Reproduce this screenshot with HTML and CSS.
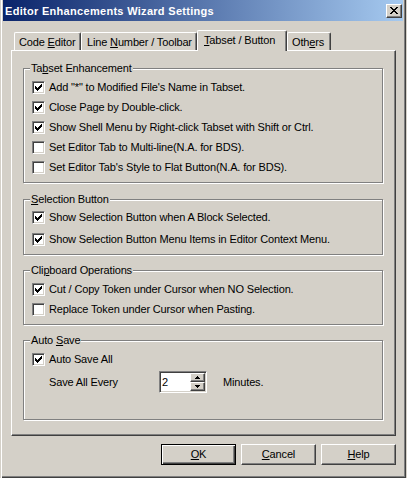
FILE: index.html
```html
<!DOCTYPE html>
<html>
<head>
<meta charset="utf-8">
<link rel="stylesheet" href="styles.css">
</head>
<body>
<div class="window">
  <div class="titlebar">
    <span class="title">Editor Enhancements Wizard Settings</span>
    <span class="close"><svg width="8" height="7" viewBox="0 0 8 7" shape-rendering="crispEdges"><path d="M0 0h2v1H0zM6 0h2v1H6zM1 1h2v1H1zM5 1h2v1H5zM2 2h4v1H2zM3 3h2v1H3zM2 4h4v1H2zM1 5h2v1H1zM5 5h2v1H5zM0 6h2v1H0zM6 6h2v1H6z" fill="#000"/></svg></span>
  </div>
  <div class="tabctl">
    <div class="tabs">
      <div class="tab t1">Code <u>E</u>ditor</div>
      <div class="tab t2">Line <u>N</u>umber / Toolbar</div>
      <div class="tab t3 sel"><u>T</u>abset / Button</div>
      <div class="tab t4">Oth<u>e</u>rs</div>
    </div>
    <div class="page">
      <fieldset class="group g1">
        <legend>Ta<u>b</u>set Enhancement</legend>
        <div class="row"><span class="cb"><svg width="7" height="7" viewBox="0 0 7 7" shape-rendering="crispEdges"><path d="M0 2h1v3H0zM1 3h1v3H1zM2 4h1v3H2zM3 3h1v3H3zM4 2h1v3H4zM5 1h1v3H5zM6 0h1v3H6z"/></svg></span>Add "*" to Modified File's Name in Tabset.</div>
        <div class="row"><span class="cb"><svg width="7" height="7" viewBox="0 0 7 7" shape-rendering="crispEdges"><path d="M0 2h1v3H0zM1 3h1v3H1zM2 4h1v3H2zM3 3h1v3H3zM4 2h1v3H4zM5 1h1v3H5zM6 0h1v3H6z"/></svg></span>Close Page by Double-click.</div>
        <div class="row"><span class="cb"><svg width="7" height="7" viewBox="0 0 7 7" shape-rendering="crispEdges"><path d="M0 2h1v3H0zM1 3h1v3H1zM2 4h1v3H2zM3 3h1v3H3zM4 2h1v3H4zM5 1h1v3H5zM6 0h1v3H6z"/></svg></span>Show Shell Menu by Right-click Tabset with Shift or Ctrl.</div>
        <div class="row"><span class="cb"></span>Set Editor Tab to Multi-line(N.A. for BDS).</div>
        <div class="row"><span class="cb"></span>Set Editor Tab's Style to Flat Button(N.A. for BDS).</div>
      </fieldset>
      <fieldset class="group g2">
        <legend><u>S</u>election Button</legend>
        <div class="row"><span class="cb"><svg width="7" height="7" viewBox="0 0 7 7" shape-rendering="crispEdges"><path d="M0 2h1v3H0zM1 3h1v3H1zM2 4h1v3H2zM3 3h1v3H3zM4 2h1v3H4zM5 1h1v3H5zM6 0h1v3H6z"/></svg></span>Show Selection Button when A Block Selected.</div>
        <div class="row"><span class="cb"><svg width="7" height="7" viewBox="0 0 7 7" shape-rendering="crispEdges"><path d="M0 2h1v3H0zM1 3h1v3H1zM2 4h1v3H2zM3 3h1v3H3zM4 2h1v3H4zM5 1h1v3H5zM6 0h1v3H6z"/></svg></span>Show Selection Button Menu Items in Editor Context Menu.</div>
      </fieldset>
      <fieldset class="group g3">
        <legend>Cli<u>p</u>board Operations</legend>
        <div class="row"><span class="cb"><svg width="7" height="7" viewBox="0 0 7 7" shape-rendering="crispEdges"><path d="M0 2h1v3H0zM1 3h1v3H1zM2 4h1v3H2zM3 3h1v3H3zM4 2h1v3H4zM5 1h1v3H5zM6 0h1v3H6z"/></svg></span>Cut / Copy Token under Cursor when NO Selection.</div>
        <div class="row"><span class="cb"></span>Replace Token under Cursor when Pasting.</div>
      </fieldset>
      <fieldset class="group g4">
        <legend>Auto <u>S</u>ave</legend>
        <div class="row"><span class="cb"><svg width="7" height="7" viewBox="0 0 7 7" shape-rendering="crispEdges"><path d="M0 2h1v3H0zM1 3h1v3H1zM2 4h1v3H2zM3 3h1v3H3zM4 2h1v3H4zM5 1h1v3H5zM6 0h1v3H6z"/></svg></span>Auto Save All</div>
        <div class="row spinrow">
          <span class="spinlabel">Save All Every</span>
          <span class="spin">
            <span class="spinval">2</span>
            <span class="spinbtns">
              <span class="sb"><svg width="5" height="3" viewBox="0 0 5 3" shape-rendering="crispEdges"><path d="M2 0h1v1H2zM1 1h3v1H1zM0 2h5v1H0z"/></svg></span>
              <span class="sb"><svg width="5" height="3" viewBox="0 0 5 3" shape-rendering="crispEdges"><path d="M0 0h5v1H0zM1 1h3v1H1zM2 2h1v1H2z"/></svg></span>
            </span>
          </span>
          <span class="unit">Minutes.</span>
        </div>
      </fieldset>
    </div>
  </div>
  <div class="buttons">
    <div class="btn def"><u>O</u>K</div>
    <div class="btn"><u>C</u>ancel</div>
    <div class="btn"><u>H</u>elp</div>
  </div>
</div>
</body>
</html>
```

FILE: styles.css
```css
html, body {
  margin: 0;
  padding: 0;
  background: #d4d0c8;
}
body {
  font-family: "Liberation Sans", Arial, sans-serif;
  font-size: 11px;
  letter-spacing: -0.15px;
  color: #000;
}
u {
  text-decoration: underline;
  text-underline-offset: 1px;
}
.window {
  width: 406px;
  height: 478px;
  box-sizing: border-box;
  padding: 0 3px;
  background: #d4d0c8;
  box-shadow: inset 1px 0 0 #d4d0c8, inset 2px 0 0 #fff, inset -1px -1px 0 #404040, inset -2px -2px 0 #808080;
  display: flex;
  flex-direction: column;
}
.titlebar {
  height: 21px;
  background: linear-gradient(to right, #0a246a, #a6caf0);
  display: flex;
  align-items: flex-start;
  justify-content: space-between;
}
.title {
  color: #fff;
  font-weight: bold;
  font-size: 11px;
  letter-spacing: 0.3px;
  line-height: 13px;
  padding: 5px 0 0 2px;
}
.close {
  width: 16px;
  height: 14px;
  box-sizing: border-box;
  margin: 4px 1px 0 0;
  background: #d4d0c8;
  border-style: solid;
  border-width: 1px;
  border-color: #fff #404040 #404040 #fff;
  box-shadow: inset -1px -1px 0 #808080;
  display: flex;
  align-items: center;
  justify-content: center;
  padding: 0 1px 1px 0;
}
.close svg { display: block; }

.tabctl {
  margin: 9px 0 0 8px;
  width: 385px;
}
.tabs {
  height: 20px;
  display: flex;
  align-items: flex-end;
  padding-left: 3px;
}
.tab {
  height: 18px;
  box-sizing: border-box;
  border-top: 1px solid #fff;
  border-left: 1px solid #fff;
  border-right: 1px solid #404040;
  border-top-left-radius: 2px;
  border-top-right-radius: 2px;
  box-shadow: inset -1px 0 0 #808080;
  line-height: 16px;
  padding: 1px 0 0 4px;
  white-space: nowrap;
  overflow: hidden;
  background: #d4d0c8;
}
.t1 { width: 67px; }
.t2 { width: 116px; padding-left: 5px; }
.t4 { width: 44px; }
.tab.sel {
  height: 21px;
  margin-bottom: -1px;
  width: 90px;
  padding-left: 6px;
  position: relative;
  z-index: 1;
}

.page {
  height: 386px;
  box-sizing: border-box;
  border-top: 1px solid #fff;
  border-left: 1px solid #fff;
  border-right: 1px solid #404040;
  border-bottom: 1px solid #404040;
  box-shadow: inset -1px -1px 0 #808080;
  padding: 11px 11px 0 11px;
}

.group {
  margin: 0;
  padding: 0;
  width: 360px;
  box-sizing: border-box;
  min-inline-size: 0;
  border: 1px solid #808080;
  box-shadow: inset 1px 1px 0 #fff, 1px 1px 0 #fff;
}
.group legend {
  padding: 0 1px;
  margin-left: 6px;
  line-height: 13px;
  font-size: 11px;
  background: #d4d0c8;
}
.g1 { padding: 2px 0 5px; }
.g2 { margin-top: 10px; padding: 0 0 4px; }
.g3 { margin-top: 9px; padding: 2px 0 5px; }
.g4 { margin-top: 9px; padding: 2px 0 26px; }

.row {
  height: 20px;
  display: flex;
  align-items: center;
  padding-left: 8px;
  white-space: nowrap;
}
.g2 .row { height: 22px; }

.cb {
  width: 13px;
  height: 13px;
  box-sizing: border-box;
  flex: none;
  margin-right: 4px;
  background: #fff;
  border-style: solid;
  border-width: 1px;
  border-color: #808080 #fff #fff #808080;
  box-shadow: inset 1px 1px 0 #404040, inset -1px -1px 0 #d4d0c8;
  padding: 2px 0 0 2px;
}
.cb svg { display: block; }

.spinrow {
  height: 22px;
  margin-top: 2px;
}
.spinlabel {
  width: 110px;
  padding-left: 17px;
}
.spin {
  width: 48px;
  height: 22px;
  box-sizing: border-box;
  border-style: solid;
  border-width: 1px;
  border-color: #808080 #fff #fff #808080;
  box-shadow: inset 1px 1px 0 #404040, inset -1px -1px 0 #d4d0c8;
  background: #fff;
  display: flex;
  padding: 1px;
}
.spinval {
  flex: 1;
  line-height: 18px;
  padding-left: 1px;
}
.spinbtns {
  width: 15px;
  display: flex;
  flex-direction: column;
}
.sb {
  flex: 1;
  box-sizing: border-box;
  background: #d4d0c8;
  border-style: solid;
  border-width: 1px;
  border-color: #fff #404040 #404040 #fff;
  box-shadow: inset -1px -1px 0 #808080;
  display: flex;
  align-items: center;
  justify-content: center;
}
.sb svg { display: block; }
.unit {
  margin-left: 16px;
}

.buttons {
  display: flex;
  justify-content: flex-end;
  gap: 5px;
  margin: 8px 7px 0 0;
}
.btn {
  width: 75px;
  height: 21px;
  box-sizing: border-box;
  border-style: solid;
  border-width: 1px;
  border-color: #fff #404040 #404040 #fff;
  box-shadow: inset -1px -1px 0 #808080;
  text-align: center;
  line-height: 18px;
}
.btn.def {
  border-color: #000;
  box-shadow: inset 1px 1px 0 #fff, inset -1px -1px 0 #404040, inset -2px -2px 0 #808080;
}
```
